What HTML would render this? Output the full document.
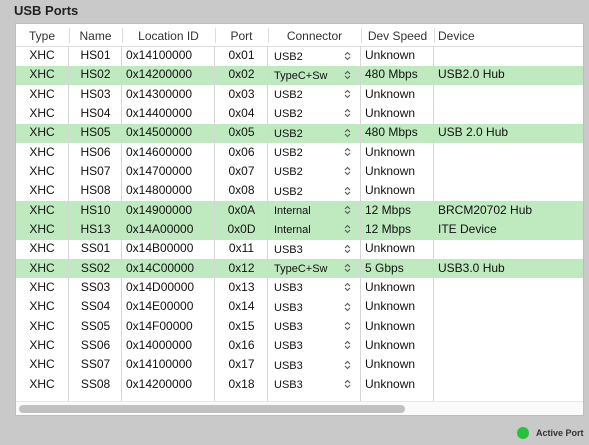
<!DOCTYPE html>
<html><head><style>
body{margin:0;width:589px;height:445px;background:#c9c9c9;font-family:"Liberation Sans",sans-serif;position:relative;overflow:hidden}
.t{position:absolute;left:14px;top:3px;font-size:13px;font-weight:bold;color:#222}
.box{position:absolute;left:15px;top:23px;width:567px;height:391px;background:#fff;border:1px solid #bdbdbd;overflow:hidden}
.hd{position:absolute;left:0;top:0;width:567px;height:22px;border-bottom:1px solid #ddd;background:#fff}
.c{position:absolute;font-size:12px;color:#111;white-space:nowrap;text-align:center}
.row{position:absolute;left:0;width:567px;height:19.33px}
.g{background:#bfeabf}
.v{position:absolute;top:22px;width:1px;height:355px;background:#d6d6d6}
.hv{position:absolute;top:4px;width:1px;height:15px;background:#ddd}
.sb{position:absolute;left:0;top:377px;width:567px;height:14px;background:#fafafa;border-top:1px solid #e8e8e8}
.th{position:absolute;left:3px;top:3px;width:386px;height:8px;border-radius:4px;background:#c1c1c1}
.ch{position:absolute;left:328px}
</style></head><body>
<div class="t">USB Ports</div>
<div class="box" id="b">
<div class="hd"></div>
</div>
<div style="position:absolute;left:517px;top:427px;width:12px;height:12px;border-radius:50%;background:#27c23c"></div>
<div style="position:absolute;left:536px;top:428px;font-size:9px;font-weight:bold;color:#333">Active Port</div>
<script>
var b=document.getElementById('b');
var cols=[[0,52],[53,53],[106,93],[199,53],[252,93],[345,73],[418,149]];
var hdr=['Type','Name','Location ID','Port','Connector','Dev Speed','Device'];
var h='';
hdr.forEach(function(t,i){var a=cols[i];var al=i==6?'left;padding-left:4px':'center';var w=i==6?a[1]-4:a[1];
h+='<div class="c" style="left:'+a[0]+'px;width:'+w+'px;top:5px;text-align:'+al+';color:#333">'+t+'</div>';
if(i>0)h+='<div class="hv" style="left:'+a[0]+'px"></div>';});
var data=[
['HS01','0x14100000','0x01','USB2','Unknown','',0],
['HS02','0x14200000','0x02','TypeC+Sw','480 Mbps','USB2.0 Hub',1],
['HS03','0x14300000','0x03','USB2','Unknown','',0],
['HS04','0x14400000','0x04','USB2','Unknown','',0],
['HS05','0x14500000','0x05','USB2','480 Mbps','USB 2.0 Hub',1],
['HS06','0x14600000','0x06','USB2','Unknown','',0],
['HS07','0x14700000','0x07','USB2','Unknown','',0],
['HS08','0x14800000','0x08','USB2','Unknown','',0],
['HS10','0x14900000','0x0A','Internal','12 Mbps','BRCM20702 Hub',1],
['HS13','0x14A00000','0x0D','Internal','12 Mbps','ITE Device',1],
['SS01','0x14B00000','0x11','USB3','Unknown','',0],
['SS02','0x14C00000','0x12','TypeC+Sw','5 Gbps','USB3.0 Hub',1],
['SS03','0x14D00000','0x13','USB3','Unknown','',0],
['SS04','0x14E00000','0x14','USB3','Unknown','',0],
['SS05','0x14F00000','0x15','USB3','Unknown','',0],
['SS06','0x14000000','0x16','USB3','Unknown','',0],
['SS07','0x14100000','0x17','USB3','Unknown','',0],
['SS08','0x14200000','0x18','USB3','Unknown','',0]];
data.forEach(function(r,i){var y=22.5+i*19.33;
h+='<div class="row'+(r[6]?' g':'')+'" style="top:'+y+'px"></div>';
var ty=y+1.5;
h+='<div class="c" style="left:0;width:52px;top:'+ty+'px">XHC</div>';
h+='<div class="c" style="left:53px;width:53px;top:'+ty+'px">'+r[0]+'</div>';
h+='<div class="c" style="left:110px;top:'+ty+'px;text-align:left">'+r[1]+'</div>';
h+='<div class="c" style="left:199px;width:53px;top:'+ty+'px">'+r[2]+'</div>';
h+='<div class="c" style="left:258px;top:'+(ty+2.5)+'px;font-size:11px;text-align:left">'+r[3]+'</div>';
h+='<svg class="ch" style="top:'+(y+4)+'px" width="7" height="10" viewBox="0 0 7 10"><path d="M1 4L3.5 1.5L6 4M1 6L3.5 8.5L6 6" fill="none" stroke="#555" stroke-width="1.1"/></svg>';
h+='<div class="c" style="left:349px;top:'+ty+'px;text-align:left">'+r[4]+'</div>';
h+='<div class="c" style="left:422px;top:'+ty+'px;text-align:left">'+r[5]+'</div>';
});
[52,105,198,251,344,417].forEach(function(x){h+='<div class="v" style="left:'+x+'px"></div>';});
h+='<div class="sb"><div class="th"></div></div>';
b.innerHTML+=h;
</script>
</body></html>
